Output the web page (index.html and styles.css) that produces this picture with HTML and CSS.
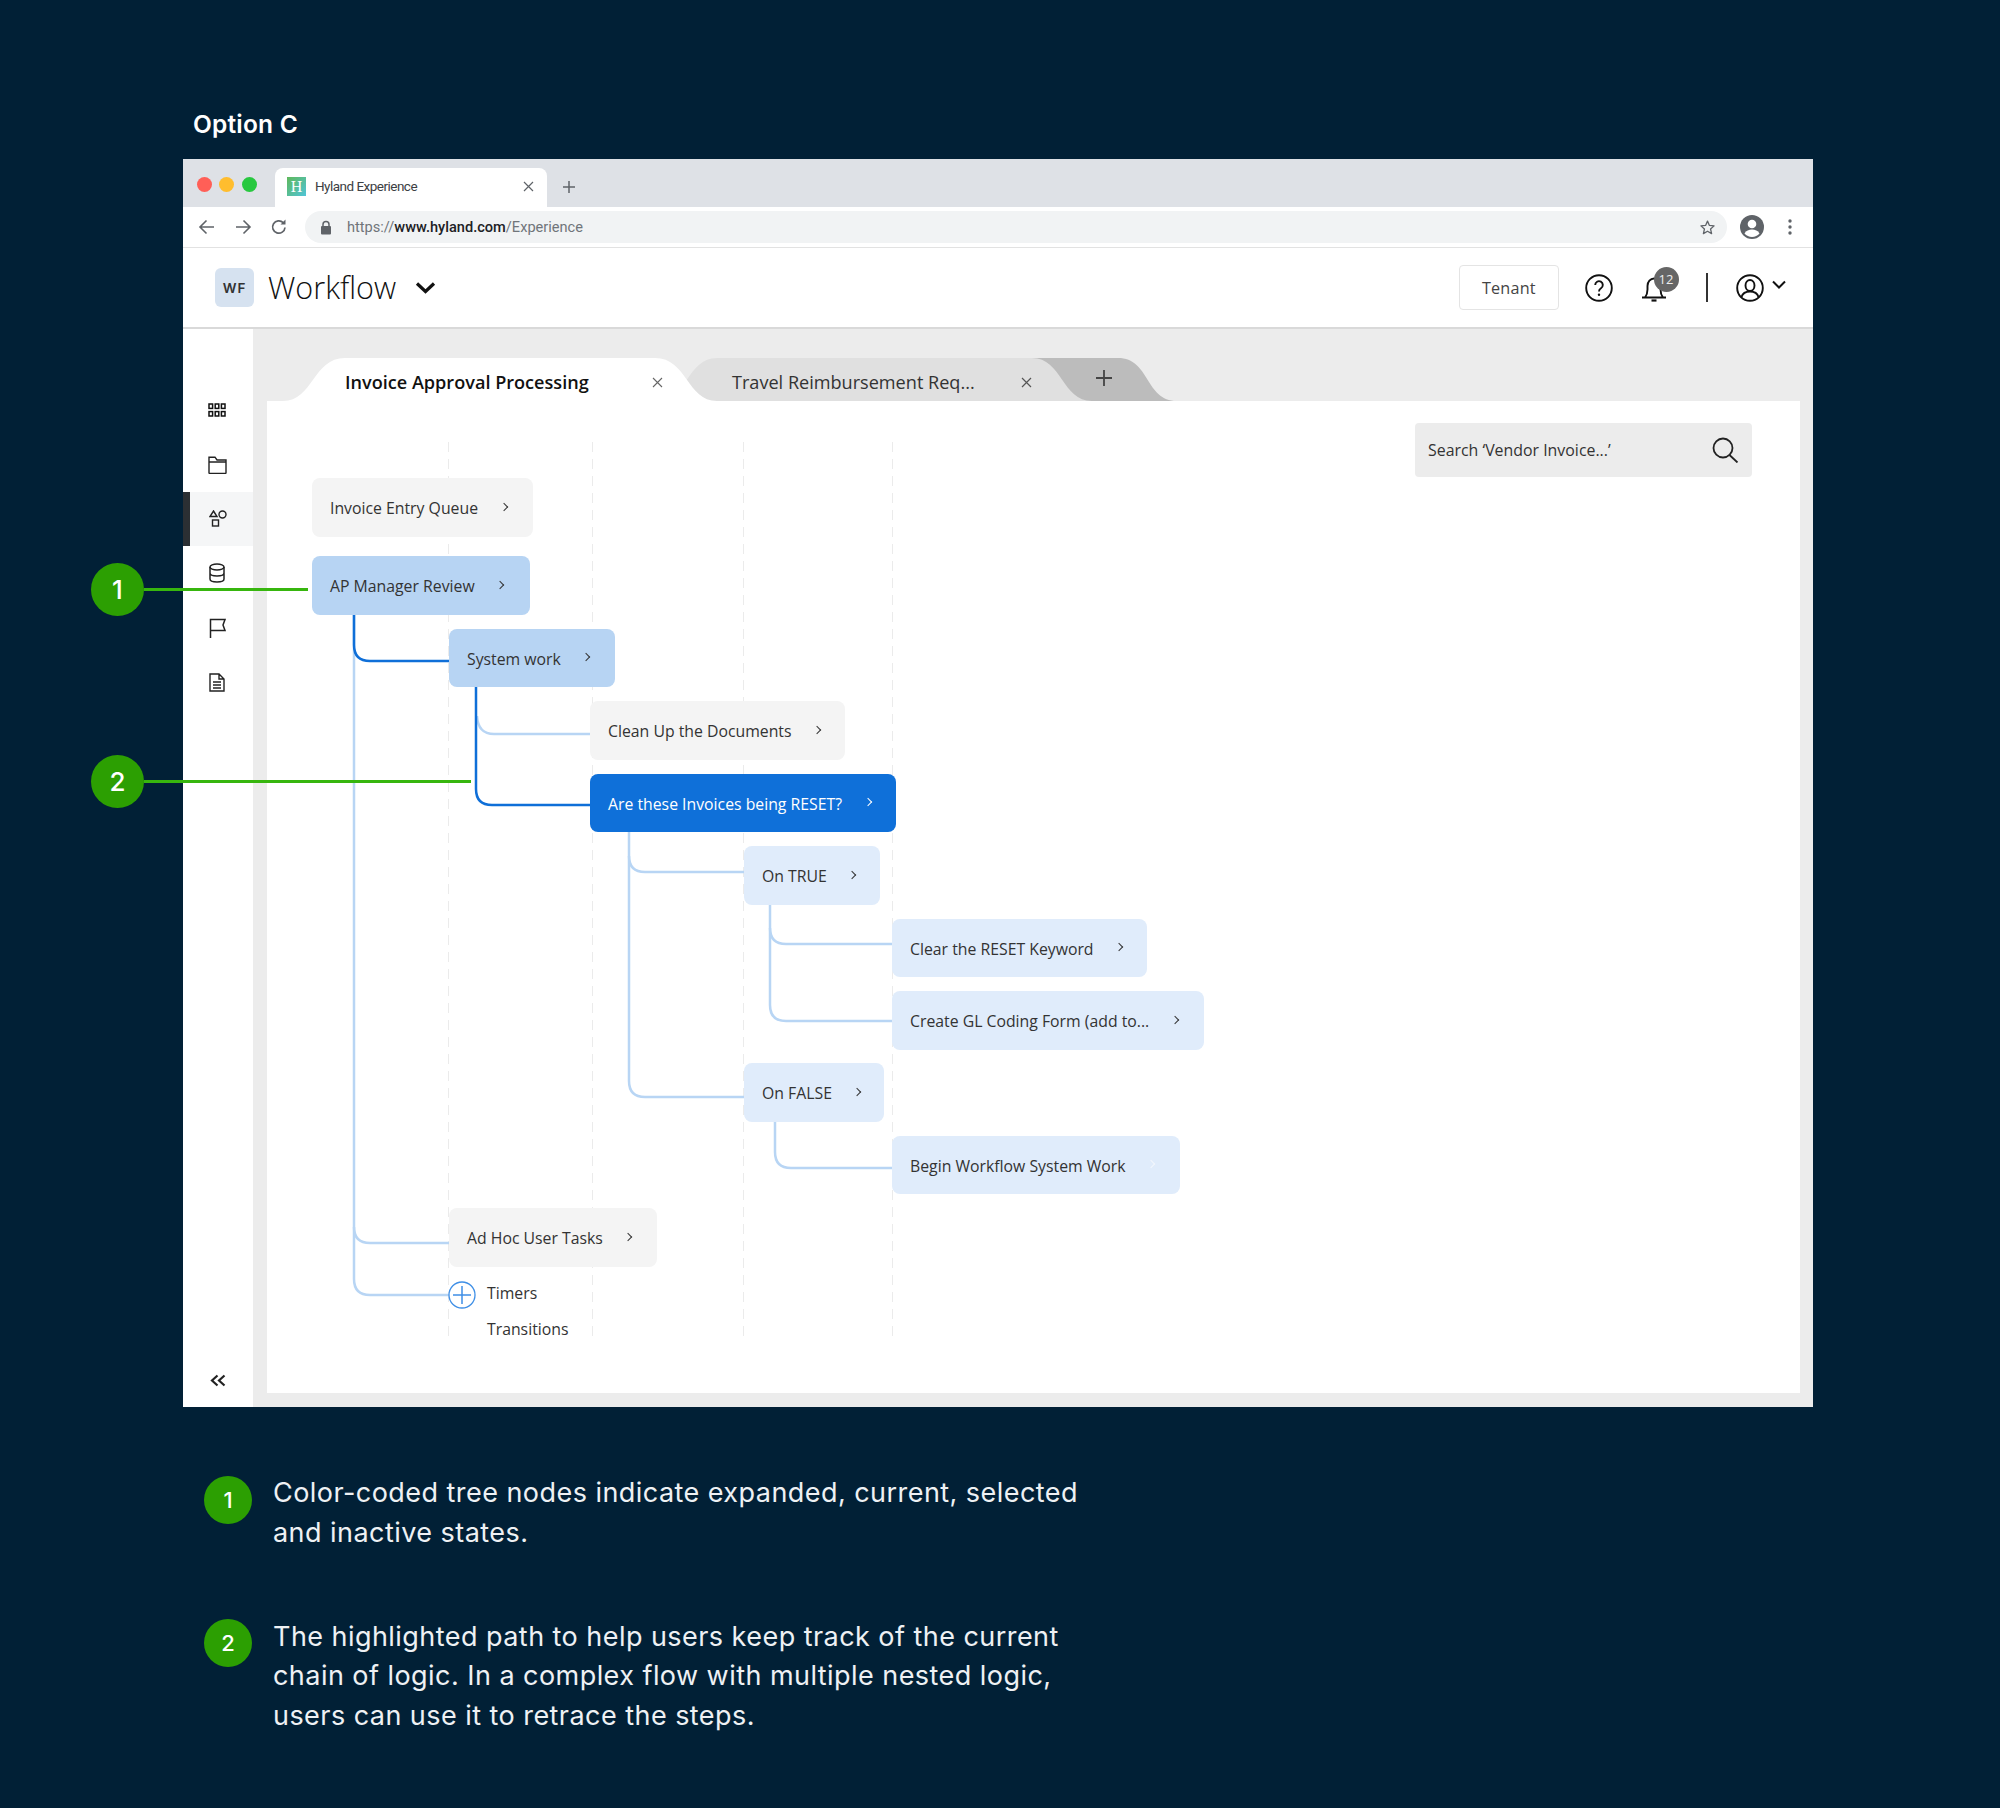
FILE: index.html
```html
<!DOCTYPE html>
<html lang="en">
<head>
  <meta charset="UTF-8" />
  <title>Option C</title>
  <link rel="stylesheet" href="styles.css">
</head>
<body>
  <h1 class="page-title">Option C</h1>

  <div class="window">
    <!-- Browser chrome -->
    <div class="tabstrip">
      <div class="traffic">
        <span class="dot dot-red"></span>
        <span class="dot dot-yellow"></span>
        <span class="dot dot-green"></span>
      </div>
      <div class="browser-tab">
        <span class="favicon">H</span>
        <span class="browser-tab-title">Hyland Experience</span>
        <svg class="browser-tab-x" width="11" height="11" viewBox="0 0 11 11"><path d="M1 1l9 9M10 1l-9 9" stroke="#5f6368" stroke-width="1.2"/></svg>
      </div>
      <svg class="browser-plus" width="14" height="14" viewBox="0 0 14 14"><path d="M7 1v12M1 7h12" stroke="#5f6368" stroke-width="1.5"/></svg>
    </div>
    <div class="toolbar">
      <svg class="nav-icon" width="18" height="16" viewBox="0 0 18 16"><path d="M16 8H2M8.500 1.500L2 8l6.500 6.500" fill="none" stroke="#5f6368" stroke-width="1.600"/></svg>
      <svg class="nav-icon" width="18" height="16" viewBox="0 0 18 16"><path d="M2 8h14M9.500 1.500L16 8l-6.500 6.500" fill="none" stroke="#5f6368" stroke-width="1.600"/></svg>
      <svg class="nav-icon" width="18" height="18" viewBox="0 0 18 18"><path d="M15 9.500A6.200 6.200 0 1 1 13.200 4.600" fill="none" stroke="#5f6368" stroke-width="1.700"/><path d="M15.500 1.500v5h-5z" fill="#5f6368"/></svg>
      <div class="urlbar">
        <svg width="12" height="15" viewBox="0 0 12 15"><path d="M3 6V4.500a3 3 0 0 1 6 0V6" fill="none" stroke="#5f6368" stroke-width="1.500"/><rect x="1" y="6" width="10" height="8.500" rx="1" fill="#5f6368"/></svg>
        <span class="url">https://<b>www.hyland.com</b>/Experience</span>
        <svg class="star" width="17" height="17" viewBox="0 0 24 24"><path d="M12 3l2.700 6.100 6.600.6-5 4.400 1.500 6.500L12 17.200l-5.800 3.400 1.500-6.500-5-4.400 6.600-.6z" fill="none" stroke="#5f6368" stroke-width="1.800" stroke-linejoin="round"/></svg>
      </div>
      <svg class="avatar" width="24" height="24" viewBox="0 0 24 24"><circle cx="12" cy="12" r="12" fill="#5f6368"/><circle cx="12" cy="9" r="4.300" fill="#fff"/><path d="M4.500 18.500c1.500-3 4.500-4 7.500-4s6 1 7.500 4A10.500 10.500 0 0 1 12 22a10.500 10.500 0 0 1-7.500-3.500z" fill="#fff"/></svg>
      <svg class="menu-dots" width="4" height="16" viewBox="0 0 4 16"><circle cx="2" cy="2" r="1.700" fill="#5f6368"/><circle cx="2" cy="8" r="1.700" fill="#5f6368"/><circle cx="2" cy="14" r="1.700" fill="#5f6368"/></svg>
    </div>

    <!-- App header -->
    <header class="app-header">
      <div class="logo">WF</div>
      <div class="app-name">Workflow</div>
      <svg class="app-chevron" width="21" height="13" viewBox="0 0 21 13"><path d="M2 2.500l8.500 8 8.500-8" fill="none" stroke="#111" stroke-width="3.200"/></svg>
      <button class="tenant">Tenant</button>
      <svg class="help" width="28" height="28" viewBox="0 0 28 28"><circle cx="14" cy="14" r="12.800" fill="none" stroke="#111" stroke-width="1.900"/><path d="M10.200 11a3.800 3.800 0 1 1 5.800 3.200c-1.300.8-2 1.500-2 3.200" fill="none" stroke="#111" stroke-width="1.900"/><circle cx="14" cy="20.800" r="1.200" fill="#111"/></svg>
      <div class="bell">
        <svg width="26" height="28" viewBox="0 0 26 28"><path d="M1 23.500h24M4 23.500c1.500-2 2.500-3.500 2.500-8V12a6.500 7.500 0 0 1 13 0v3.500c0 4.500 1 6 2.500 8" fill="none" stroke="#111" stroke-width="1.900"/><path d="M10.500 26.500h5" stroke="#111" stroke-width="2.200"/></svg>
        <span class="badge">12</span>
      </div>
      <span class="header-divider"></span>
      <svg class="user" width="28" height="28" viewBox="0 0 28 28"><circle cx="14" cy="14" r="12.800" fill="none" stroke="#111" stroke-width="1.900"/><ellipse cx="14" cy="11.500" rx="4.500" ry="5.500" fill="none" stroke="#111" stroke-width="1.900"/><path d="M5.500 23c1-3.500 4-5.500 8.500-5.500s7.500 2 8.500 5.500" fill="none" stroke="#111" stroke-width="1.900"/></svg>
      <svg class="user-chevron" width="14" height="9" viewBox="0 0 14 9"><path d="M1 1.500l6 6 6-6" fill="none" stroke="#111" stroke-width="2"/></svg>
    </header>

    <div class="main">
      <!-- Side nav -->
      <nav class="sidebar">
        <div class="side-item">
          <svg width="18" height="14" viewBox="0 0 18 14"><g fill="none" stroke="#111" stroke-width="1.500"><rect x="1" y="1" width="3.600" height="4.400"/><rect x="7.200" y="1" width="3.600" height="4.400"/><rect x="13.400" y="1" width="3.600" height="4.400"/><rect x="1" y="8.600" width="3.600" height="4.400"/><rect x="7.200" y="8.600" width="3.600" height="4.400"/><rect x="13.400" y="8.600" width="3.600" height="4.400"/></g></svg>
        </div>
        <div class="side-item">
          <svg width="19" height="18" viewBox="0 0 19 18"><path d="M1 16.200V1.200h6l2 2.800h9v12.800a.6.600 0 0 1-.6.600H1.600a.6.600 0 0 1-.6-.6zM1 6h17" fill="none" stroke="#222" stroke-width="1.400"/></svg>
        </div>
        <div class="side-item side-item-active">
          <svg width="18" height="17" viewBox="0 0 18 17"><g fill="none" stroke="#222" stroke-width="1.400"><path d="M4.500 1L8 6.500H1z"/><circle cx="13.500" cy="4.500" r="3.500"/><rect x="3.500" y="10" width="6" height="6"/></g></svg>
        </div>
        <div class="side-item">
          <svg width="16" height="20" viewBox="0 0 16 20"><g fill="none" stroke="#222" stroke-width="1.500"><ellipse cx="8" cy="4" rx="7" ry="3"/><path d="M1 4v12c0 1.800 3 3 7 3s7-1.200 7-3V4M1 10c0 1.800 3 3 7 3s7-1.200 7-3"/></g></svg>
        </div>
        <div class="side-item">
          <svg width="17" height="20" viewBox="0 0 17 20"><path d="M1.500 20V1.500h14.500l-2 5.500 2 5.500H1.500" fill="none" stroke="#222" stroke-width="1.500"/></svg>
        </div>
        <div class="side-item">
          <svg width="16" height="19" viewBox="0 0 16 19"><path d="M1 1h9l5 5v12H1zM10 1v5h5M4 9h8M4 12h8M4 15h8" fill="none" stroke="#222" stroke-width="1.400"/></svg>
        </div>
        <svg class="collapse" width="16" height="13" viewBox="0 0 16 13"><path d="M7.500 1.500l-5.500 5 5.500 5M14.500 1.500l-5.500 5 5.500 5" fill="none" stroke="#222" stroke-width="2.200"/></svg>
      </nav>

      <div class="workspace">
        <!-- Document tabs -->
        <div class="doc-tabs">
          <svg class="doc-tabs-shapes" viewBox="267 329 1533 72">
            <path d="M1030 401V358H1118C1150 358 1145 401 1177 401Z" fill="#bcbcbc"/>
            <path d="M657 401C687 401 687 358 717 358H1032C1062 358 1062 401 1092 401Z" fill="#e0e0e0"/>
            <path d="M283 401C313 401 313 358 345 358H655C687 358 687 401 717 401Z" fill="#fff"/>
          </svg>
          <div class="doc-tab doc-tab-active">
            <span>Invoice Approval Processing</span>
            <svg width="11" height="11" viewBox="0 0 11 11"><path d="M1 1l9 9M10 1l-9 9" stroke="#666" stroke-width="1.100"/></svg>
          </div>
          <div class="doc-tab doc-tab-second">
            <span>Travel Reimbursement Req...</span>
            <svg width="11" height="11" viewBox="0 0 11 11"><path d="M1 1l9 9M10 1l-9 9" stroke="#555" stroke-width="1.200"/></svg>
          </div>
          <svg class="doc-tab-plus" width="16" height="16" viewBox="0 0 16 16"><path d="M8 0v16M0 8h16" stroke="#444" stroke-width="1.800"/></svg>
        </div>

        <!-- Logic tree, a free canvas -->
        <div class="canvas">
          <svg class="wires" viewBox="267 401 1533 992">
            <g class="guides">
              <path d="M448.500 442V1338M592.500 442V1338M743.500 442V1338M892.500 442V1338"/>
            </g>
            <g class="wire-light">
              <path d="M354 615V1227Q354 1243 370 1243H449"/>
              <path d="M354 1227V1279Q354 1295 370 1295H449"/>
              <path d="M477 716Q478 734 494 734H590"/>
              <path d="M629 832V856Q629 872 645 872H744"/>
              <path d="M629 856V1081Q629 1097 645 1097H744"/>
              <path d="M770 904V928Q770 944 786 944H892"/>
              <path d="M770 928V1005Q770 1021 786 1021H892"/>
              <path d="M775 1122V1152Q775 1168 791 1168H892"/>
            </g>
            <g class="wire-dark">
              <path d="M354 615V645Q354 661 370 661H449"/>
              <path d="M476 687V789Q476 805 492 805H590"/>
            </g>
          </svg>

          <div class="search">
            <span>Search ‘Vendor Invoice...’</span>
            <svg width="27" height="26" viewBox="0 0 27 26"><circle cx="11" cy="11" r="9.500" fill="none" stroke="#222" stroke-width="1.800"/><path d="M17.500 18l8 7.500" stroke="#222" stroke-width="1.800"/></svg>
          </div>

          <div class="node inactive n-queue"><span>Invoice Entry Queue</span><i class="chev"></i></div>
          <div class="node expanded n-ap"><span>AP Manager Review</span><i class="chev"></i></div>
          <div class="node expanded n-system"><span>System work</span><i class="chev"></i></div>
          <div class="node inactive n-clean"><span>Clean Up the Documents</span><i class="chev"></i></div>
          <div class="node current n-reset"><span>Are these Invoices being RESET?</span><i class="chev"></i></div>
          <div class="node selected n-true"><span>On TRUE</span><i class="chev"></i></div>
          <div class="node selected n-clear"><span>Clear the RESET Keyword</span><i class="chev"></i></div>
          <div class="node selected n-create"><span>Create GL Coding Form (add to...</span><i class="chev"></i></div>
          <div class="node selected n-false"><span>On FALSE</span><i class="chev"></i></div>
          <div class="node selected n-begin"><span>Begin Workflow System Work</span><i class="chev chev-faint"></i></div>
          <div class="node inactive n-adhoc"><span>Ad Hoc User Tasks</span><i class="chev"></i></div>

          <svg class="plus-circle" width="28" height="28" viewBox="0 0 28 28"><circle cx="14" cy="14" r="13" fill="#fff" stroke="#3f8fe6" stroke-width="1.300"/><path d="M14 5v18M5 14h18" stroke="#3f8fe6" stroke-width="1.500"/></svg>
          <div class="leaf leaf-timers">Timers</div>
          <div class="leaf leaf-transitions">Transitions</div>
        </div>
      </div>
    </div>
  </div>

  <!-- Callouts over the window -->
  <div class="callout callout-one"><span class="pin">1</span><span class="callout-line"></span></div>
  <div class="callout callout-two"><span class="pin">2</span><span class="callout-line"></span></div>

  <section class="notes">
    <div class="note">
      <span class="note-pin">1</span>
      <p>Color-coded tree nodes indicate expanded, current, selected<br>and inactive states.</p>
    </div>
    <div class="note">
      <span class="note-pin">2</span>
      <p>The highlighted path to help users keep track of the current<br>chain of logic. In a complex flow with multiple nested logic,<br>users can use it to retrace the steps.</p>
    </div>
  </section>
</body>
</html>
```

FILE: styles.css
```css
body {
  margin: 0;
  width: 2000px;
  height: 1808px;
  position: relative;
  overflow: hidden;
  background: #012036;
  font-family: "Open Sans", sans-serif;
  color: #333;
}
.page-title {
  margin: 0 0 20px 193px;
  padding-top: 109px;
  font: 600 24.500px/30px Inter, sans-serif;
  letter-spacing: 0.200px;
  color: #fff;
}

/* Window */
.window {
  margin-left: 183px;
  width: 1630px;
  height: 1248px;
  display: flex;
  flex-direction: column;
  background: #fff;
}

/* Browser chrome */
.tabstrip {
  height: 48px;
  flex: none;
  background: #dee1e6;
  display: flex;
  align-items: flex-end;
}
.traffic {
  display: flex;
  gap: 7.500px;
  padding: 0 0 15px 13.500px;
  width: 92px;
  box-sizing: border-box;
}
.dot {
  width: 15px;
  height: 15px;
  border-radius: 50%;
}
.dot-red { background: #ff5f57; }
.dot-yellow { background: #ffbd2e; }
.dot-green { background: #28c840; }
.browser-tab {
  width: 272px;
  height: 39px;
  box-sizing: border-box;
  padding: 0 13px 3px 12px;
  background: #fff;
  border-radius: 8px 8px 0 0;
  display: flex;
  align-items: center;
}
.favicon {
  width: 19px;
  height: 19px;
  margin-right: 9px;
  background: linear-gradient(135deg, #5fb85a, #4fc4d8);
  color: #fff;
  font: 16px/19px "Liberation Serif", serif;
  text-align: center;
}
.browser-tab-title {
  font: 13.500px Roboto, sans-serif;
  letter-spacing: -0.520px;
  color: #3c4043;
}
.browser-tab-x { margin-left: auto; }
.browser-plus { margin: 0 0 13px 15px; }
.toolbar {
  height: 41px;
  flex: none;
  box-sizing: border-box;
  border-bottom: 1px solid #e2e2e2;
  display: flex;
  align-items: center;
  padding-left: 15px;
}
.nav-icon { margin-right: 18px; }
.urlbar {
  width: 1422px;
  height: 32px;
  margin-left: -1px;
  box-sizing: border-box;
  padding: 0 11px 0 15px;
  border-radius: 16px;
  background: #f1f3f4;
  display: flex;
  align-items: center;
}
.url {
  margin-left: 15px;
  font: 14.600px Roboto, sans-serif;
  color: #70757a;
}
.url b {
  font-weight: 500;
  color: #202124;
}
.star { margin-left: auto; }
.avatar { margin-left: 13px; }
.menu-dots { margin-left: 23.500px; }

/* App header */
.app-header {
  height: 81px;
  flex: none;
  box-sizing: border-box;
  border-bottom: 2px solid #d9d9d9;
  display: flex;
  align-items: center;
  padding: 0 27px 0 32px;
}
.logo {
  width: 39px;
  height: 39px;
  border-radius: 6px;
  background: #d6e2f0;
  font: 600 13.500px/41px Inter, sans-serif;
  letter-spacing: 0.800px;
  text-align: center;
  color: #333;
}
.app-name {
  margin: -2px 0 0 14px;
  font-weight: 300;
  font-size: 30.600px;
  color: #111;
}
.app-chevron { margin-left: 19px; }
.tenant {
  margin-left: auto;
  width: 100px;
  height: 45px;
  border: 1px solid #e4e4e4;
  border-radius: 4px;
  background: #fff;
  font: 500 16.200px "Open Sans", sans-serif;
  letter-spacing: 0.200px;
  color: #444;
}
.help { margin-left: 26px; }
.bell {
  position: relative;
  margin-left: 27.700px;
  height: 28px;
}
.badge {
  position: absolute;
  left: 13px;
  top: -7px;
  width: 25px;
  height: 25px;
  border-radius: 50%;
  background: #666;
  color: #eee;
  font-size: 13px;
  line-height: 25px;
  text-align: center;
}
.header-divider {
  width: 2px;
  height: 29px;
  margin-left: 39.500px;
  background: #333;
}
.user { margin-left: 28.300px; }
.user-chevron { margin-left: 7.700px; margin-bottom: 6px; }

/* Layout below the header */
.main {
  flex: 1;
  display: flex;
  min-height: 0;
}
.sidebar {
  width: 70px;
  flex: none;
  display: flex;
  flex-direction: column;
  padding-top: 54px;
  box-sizing: border-box;
}
.side-item {
  height: 54.400px;
  flex: none;
  padding-right: 2px;
  display: flex;
  align-items: center;
  justify-content: center;
}
.side-item-active {
  background: #f5f6f7;
  border-left: 7px solid #2b2f33;
  padding-right: 7px;
  box-sizing: border-box;
}
.collapse {
  margin: auto 0 20px 27px;
}
.workspace {
  flex: 1;
  display: flex;
  flex-direction: column;
  background: #ececec;
  padding: 0 13px 14px 14px;
}

/* Document tabs */
.doc-tabs {
  height: 72px;
  flex: none;
  position: relative;
  display: flex;
  align-items: center;
  box-sizing: border-box;
  padding: 34px 0 0 78px;
}
.doc-tabs-shapes {
  position: absolute;
  left: 0;
  top: 0;
  width: 1533px;
  height: 72px;
}
.doc-tab {
  position: relative;
  display: flex;
  align-items: center;
  justify-content: space-between;
  font-size: 18.100px;
}
.doc-tab-active {
  width: 318px;
  margin-right: 69px;
  font-weight: 600;
  color: #111;
}
.doc-tab-second {
  width: 300px;
  color: #333;
}
.doc-tab-plus {
  position: relative;
  margin: -8px 0 0 64px;
}

/* Tree canvas */
.canvas {
  flex: 1;
  position: relative;
  background: #fff;
}
.wires {
  position: absolute;
  left: 0;
  top: 0;
  width: 1533px;
  height: 992px;
}
.wires path { fill: none; }
.guides path {
  stroke: #ebebeb;
  stroke-width: 1;
  stroke-dasharray: 10 7;
}
.wire-light path {
  stroke: #b8d5f4;
  stroke-width: 2.500;
}
.wire-dark path {
  stroke: #0f6fd8;
  stroke-width: 2.500;
}
.search {
  position: absolute;
  left: 1148px;
  top: 22px;
  width: 337px;
  height: 54px;
  box-sizing: border-box;
  padding: 0 13px 0 13px;
  border-radius: 4px;
  background: #ececec;
  display: flex;
  align-items: center;
  justify-content: space-between;
  font-size: 15.900px;
  color: #333;
}
.node {
  position: absolute;
  height: 58.500px;
  box-sizing: border-box;
  padding: 1.500px 0 0 18px;
  border-radius: 8px;
  display: flex;
  align-items: center;
  font-size: 15.800px;
  white-space: nowrap;
}
.chev {
  width: 5px;
  height: 5px;
  margin: -3px 0 0 22.500px;
  border-top: 1.800px solid currentColor;
  border-right: 1.800px solid currentColor;
  transform: rotate(45deg);
}
.chev-faint { color: #f3f7fd; }
.inactive { background: #f4f4f4; }
.expanded { background: #b7d4f3; }
.selected { background: #e0ecfb; }
.current { background: #0f70d9; color: #fff; }

.n-queue { left: 45px; top: 77px; width: 220.500px; }
.n-ap { left: 45px; top: 155px; width: 217.500px; }
.n-system { left: 182px; top: 227.500px; width: 166px; }
.n-clean { left: 323px; top: 300px; width: 255px; }
.n-reset { left: 323px; top: 372.500px; width: 306px; }
.n-true { left: 477px; top: 445px; width: 136px; }
.n-clear { left: 625px; top: 517.500px; width: 255px; }
.n-create { left: 625px; top: 590px; width: 311.500px; }
.n-false { left: 477px; top: 662px; width: 140px; }
.n-begin { left: 625px; top: 734.500px; width: 288px; }
.n-adhoc { left: 182px; top: 807px; width: 208px; }

.plus-circle {
  position: absolute;
  left: 181px;
  top: 880px;
}
.leaf {
  position: absolute;
  left: 220px;
  font-size: 15.800px;
  line-height: 22px;
}
.leaf-timers { top: 881px; }
.leaf-transitions { top: 917px; }

/* Callouts */
.callout {
  position: absolute;
  left: 91px;
  display: flex;
  align-items: center;
}
.callout-one { top: 563px; }
.callout-two { top: 755px; }
.pin {
  width: 53px;
  height: 53px;
  border-radius: 50%;
  background: #2c9f02;
  color: #fff;
  font: 500 26px/53px Inter, sans-serif;
  text-align: center;
}
.callout-line {
  height: 2.500px;
  background: #37b60e;
}
.callout-one .callout-line { width: 164px; }
.callout-two .callout-line { width: 327px; }

/* Notes under the window */
.notes {
  margin: 66px 0 0 204px;
  display: flex;
  flex-direction: column;
  gap: 64.500px;
}
.note {
  display: flex;
  gap: 21px;
}
.note-pin {
  width: 48px;
  height: 48px;
  flex: none;
  margin-top: 2.500px;
  border-radius: 50%;
  background: #2c9f02;
  color: #fff;
  font: 500 22px/48px Inter, sans-serif;
  text-align: center;
}
.note p {
  margin: 0;
  font: 400 27px/39.500px Inter, sans-serif;
  letter-spacing: 0.450px;
  color: #eef1f4;
  white-space: nowrap;
}
```
